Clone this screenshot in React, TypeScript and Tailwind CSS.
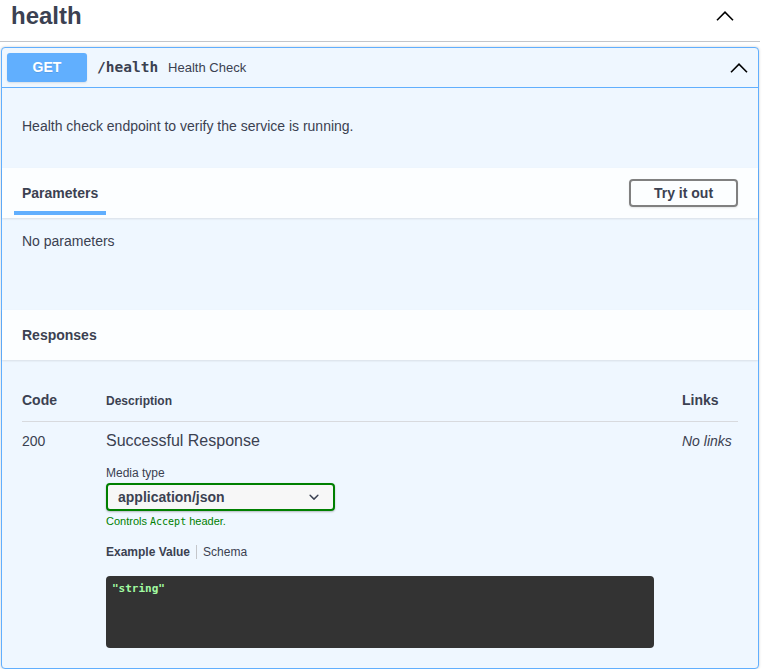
const Chevron = ({ up = true }: { up?: boolean }) => (
  <svg width="18" height="10" viewBox="0 0 18 10" fill="none">
    <polyline
      points={up ? '1,9.2 9,1.2 17,9.2' : '1,1 9,9 17,1'}
      stroke="#000"
      strokeWidth="1.6"
      strokeLinejoin="miter"
    />
  </svg>
);

const SelectArrow = () => (
  <svg width="20" height="20" viewBox="0 0 20 20">
    <path
      fill="#3b4151"
      d="M13.418 7.859a.695.695 0 01.978 0 .68.68 0 010 .969l-3.908 3.83a.697.697 0 01-.979 0l-3.908-3.83a.68.68 0 010-.969.695.695 0 01.978 0L10 11l3.418-3.141z"
    />
  </svg>
);

const App = () => {
  return (
    <div className="w-[760px] bg-white font-['Liberation_Sans',Arial,sans-serif] text-[#3b4151]">
      {/* tag header */}
      <div className="flex items-center justify-between h-[42px] border-b border-[#c4c6ca] pl-[11px] pr-[26px] pb-[9px]">
        <h3 className="text-[24px] font-bold leading-[28px]">health</h3>
        <Chevron />
      </div>

      {/* operation block */}
      <div className="mx-[1px] mt-[5px] border border-[#61affe] bg-[#eff7ff] rounded-[4px] shadow-[0_0_3px_rgba(0,0,0,0.19)]">
        <div className="flex items-center h-[40px] px-[5px] border-b border-[#61affe]">
          <span className="w-[80px] h-[29px] flex items-center justify-center rounded-[3px] bg-[#61affe] text-white text-[14px] font-bold shadow-[0_1px_2px_rgba(0,0,0,0.1)] [text-shadow:0_1px_0_rgba(0,0,0,0.1)]">
            GET
          </span>
          <span className="ml-[10px] pr-[10px] font-['DejaVu_Sans_Mono',monospace] text-[14.5px] font-bold">
            /health
          </span>
          <span className="text-[13px] flex-1">Health Check</span>
          <span className="mr-[5px]">
            <Chevron />
          </span>
        </div>

        <div className="h-[80px] px-[20px] pt-[29px] text-[14px] leading-[18px]">
          Health check endpoint to verify the service is running.
        </div>

        {/* parameters */}
        <div className="relative z-10 flex items-center justify-between h-[50px] pl-[12px] pr-[20px] bg-[#fcfeff] shadow-[0_1px_2px_rgba(0,0,0,0.1)]">
          <div className="self-end mb-[3px] px-[8px] pb-[10px] text-[14px] leading-[16px] font-bold border-b-4 border-[#61affe]">
            Parameters
          </div>
          <button className="w-[109px] h-[28px] border-2 border-[#808080] rounded-[4px] text-[14px] font-bold text-[#3b4151] bg-transparent shadow-[0_1px_2px_rgba(0,0,0,0.1)]">
            Try it out
          </button>
        </div>
        <div className="h-[92px] px-[20px] pt-[14px] text-[14px] leading-[18px]">No parameters</div>

        {/* responses */}
        <div className="relative z-10 flex items-center h-[50px] px-[20px] bg-[#fcfeff] shadow-[0_1px_2px_rgba(0,0,0,0.1)]">
          <h4 className="text-[14px] font-bold">Responses</h4>
        </div>

        <div className="px-[20px] pt-[20px] pb-[20px]">
          <div className="flex items-center h-[42px] border-b border-[#d8dade]">
            <div className="w-[84px] text-[14px] font-bold">Code</div>
            <div className="flex-1 text-[12px] font-bold">Description</div>
            <div className="w-[56px] text-[14px] font-bold">Links</div>
          </div>

          <div className="flex items-start pt-[9px]">
            <div className="w-[84px] text-[14px] leading-[20px]">200</div>
            <div className="flex-1">
              <div className="text-[16px] leading-[20px]">Successful Response</div>
              <div className="mt-[15px] text-[12px] leading-[14px]">Media type</div>
              <div className="mt-[3px] w-[229px] h-[28px] flex items-center justify-between pl-[10px] pr-[9px] border-2 border-[#008000] rounded-[4px] bg-[#f7f7f7] shadow-[0_1px_2px_0_rgba(0,0,0,0.25)]">
                <span className="text-[14px] font-bold">application/json</span>
                <SelectArrow />
              </div>
              <div className="mt-[4px] text-[11px] leading-[13px] text-[#008000]">
                Controls <span className="font-['DejaVu_Sans_Mono',monospace] text-[10px]">Accept</span> header.
              </div>
              <div className="mt-[17px] flex items-center text-[12px] leading-[14px]">
                <span className="font-bold">Example Value</span>
                <span className="mx-[6px] h-[14px] border-l border-[#c4c6ca]" />
                <span>Schema</span>
              </div>
              <div className="mt-[17px] w-[548px] h-[72px] rounded-[4px] bg-[#333333] p-[6px]">
                <pre className="font-['DejaVu_Sans_Mono',monospace] text-[11px] leading-[14px] font-bold text-[#a2fca2]">
                  "string"
                </pre>
              </div>
            </div>
            <div className="w-[56px] text-[14px] leading-[20px] italic">No links</div>
          </div>
        </div>
      </div>
    </div>
  );
};

export default App;
